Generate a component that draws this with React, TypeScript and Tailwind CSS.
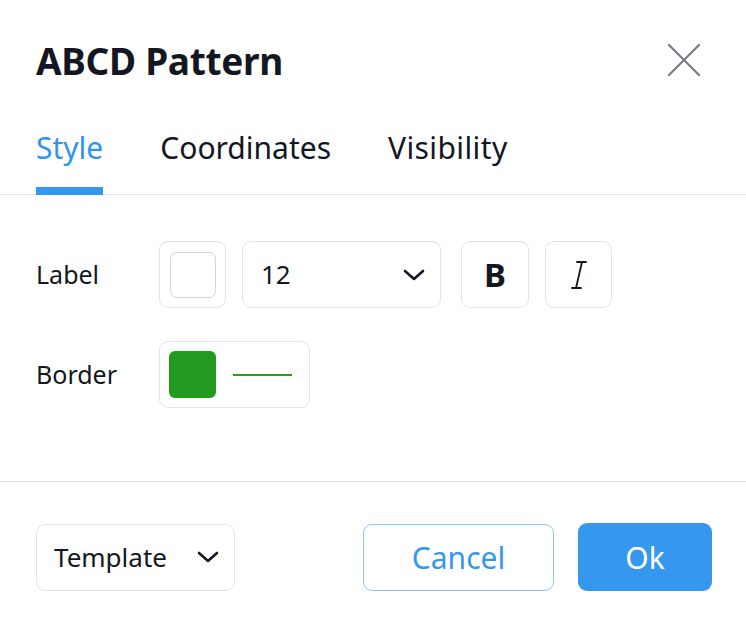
import React from "react";

function Chevron({ className }: { className?: string }) {
  return (
    <svg width="22" height="12" viewBox="0 0 22 12" className={className} fill="none">
      <path d="M2 2 L11 10 L20 2" stroke="#131722" strokeWidth="2.6" strokeLinecap="round" strokeLinejoin="round" />
    </svg>
  );
}

export default function App() {
  return (
    <div
      className="w-[746px] h-[628px] bg-white text-[#131722] flex flex-col overflow-hidden"
      style={{ fontFamily: '"Noto Sans", "Open Sans", sans-serif' }}
    >
      {/* Header */}
      <div className="h-[120px] flex items-center justify-between pl-[36px] pr-[46px]">
        <div className="text-[37px] font-bold leading-none tracking-[-0.3px]">ABCD Pattern</div>
        <svg width="32" height="32" viewBox="0 0 32 32" fill="none">
          <path d="M1 1 L31 31 M31 1 L1 31" stroke="#787b86" strokeWidth="2.2" strokeLinecap="round" />
        </svg>
      </div>

      {/* Tabs */}
      <div className="h-[75px] flex pl-[36px] gap-[57px] border-b border-[#e0e3eb]">
        <div className="flex flex-col justify-between pt-[10px]">
          <div className="text-[30px] leading-[36px] text-[#2f94ee]">Style</div>
          <div className="h-[8px] bg-[#3597ee] -mb-px" />
        </div>
        <div className="flex flex-col justify-between pt-[10px]">
          <div className="text-[30px] leading-[36px]">Coordinates</div>
          <div className="h-[8px]" />
        </div>
        <div className="flex flex-col justify-between pt-[10px]">
          <div className="text-[30px] leading-[36px] tracking-[0.4px]">Visibility</div>
          <div className="h-[8px]" />
        </div>
      </div>

      {/* Body */}
      <div className="flex flex-col gap-[33px] pt-[46px] pb-[73px] border-b border-[#e0e3eb]">
        <div className="flex items-center">
          <div className="w-[159px] pl-[36px] text-[25px]">Label</div>
          <div className="w-[67px] h-[67px] rounded-[9px] border border-[#e0e3eb] flex items-center justify-center">
            <div className="w-[46px] h-[46px] rounded-[7px] border border-[#d1d4dc] bg-white" />
          </div>
          <div className="ml-[16px] w-[199px] h-[67px] rounded-[9px] border border-[#e0e3eb] flex items-center justify-between pl-[18px] pr-[15px]">
            <span className="text-[26px]">12</span>
            <Chevron />
          </div>
          <div className="ml-[20px] w-[68px] h-[67px] rounded-[9px] border border-[#e0e3eb] flex items-center justify-center">
            <span className="text-[33px] font-bold leading-none">B</span>
          </div>
          <div className="ml-[16px] w-[67px] h-[67px] rounded-[9px] border border-[#e0e3eb] flex items-center justify-center">
            <svg width="20" height="30" viewBox="0 0 20 30" fill="none">
              <path d="M8 2 L17 2 M3 28 L12 28 M13 2 L7 28" stroke="#131722" strokeWidth="1.8" strokeLinecap="round" />
            </svg>
          </div>
        </div>
        <div className="flex items-center">
          <div className="w-[159px] pl-[36px] text-[25px]">Border</div>
          <div className="w-[151px] h-[67px] rounded-[9px] border border-[#e0e3eb] flex items-center pl-[9px]">
            <div className="w-[47px] h-[47px] rounded-[6px] bg-[#22991f]" />
            <div className="ml-[17px] w-[59px] h-[2px] bg-[#22a11e]" />
          </div>
        </div>
      </div>

      {/* Footer */}
      <div className="flex items-center pt-[41px] pl-[36px] pr-[34px]">
        <div className="w-[199px] h-[67px] rounded-[9px] border border-[#e0e3eb] flex items-center justify-between pl-[17px] pr-[15px]">
          <span className="text-[26px]">Template</span>
          <Chevron />
        </div>
        <div className="ml-auto w-[191px] h-[67px] rounded-[9px] border border-[#8ec5f7] flex items-center justify-center text-[30px] text-[#3597ee]">
          Cancel
        </div>
        <div className="ml-[24px] w-[134px] h-[68px] rounded-[9px] bg-[#3597ee] flex items-center justify-center text-[30px] text-white">
          Ok
        </div>
      </div>
    </div>
  );
}
